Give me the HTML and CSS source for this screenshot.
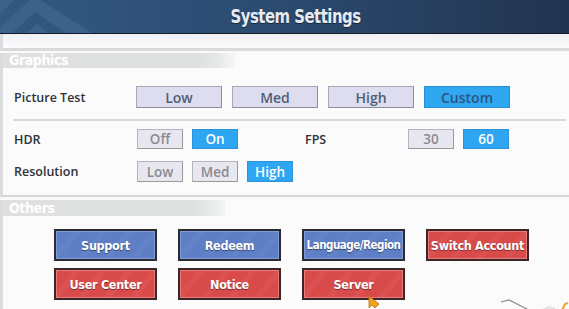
FILE: index.html
```html
<!DOCTYPE html>
<html lang="en">
<head>
    <meta charset="UTF-8">
    <meta name="viewport" content="width=device-width, initial-scale=1.0">
    <title>System Settings</title>
    <link rel="stylesheet" href="styles.css">
</head>
<body>

    <div class="screen">
        <header class="topbar">
            <svg class="topbar-deco" width="120" height="33" viewBox="0 0 120 33">
                <polygon points="0,0 14,0 0,14" fill="#3a6189"/>
                <polygon points="-6,33 34,-4 92,33 66,33 35,12 12,33" fill="#3b628b"/>
                <polygon points="26,33 37,24 47,33" fill="#3b628b"/>
            </svg>
            <h1>System Settings</h1>
        </header>
        <div class="strip"></div>

        <div class="panel graphics">
            <div class="sec-title">Graphics</div>

            <div class="row row-quality">
                <span class="label">Picture Test</span>
                <button class="opt">Low</button>
                <button class="opt">Med</button>
                <button class="opt">High</button>
                <button class="opt on">Custom</button>
            </div>

            <div class="sep"></div>

            <div class="row row-hdr">
                <span class="label">HDR</span>
                <button class="tog">Off</button>
                <button class="tog on">On</button>
                <span class="label label-fps">FPS</span>
                <button class="tog">30</button>
                <button class="tog on">60</button>
            </div>

            <div class="row row-res">
                <span class="label">Resolution</span>
                <button class="tog">Low</button>
                <button class="tog">Med</button>
                <button class="tog on">High</button>
            </div>
        </div>

        <div class="panel others">
            <div class="sec-title">Others</div>
            <div class="action-grid">
                <button class="action blue">Support</button>
                <button class="action blue">Redeem</button>
                <button class="action blue small">Language/Region</button>
                <button class="action red">Switch Account</button>
                <button class="action red">User Center</button>
                <button class="action red">Notice</button>
                <button class="action red">Server</button>
            </div>

            <!-- mouse pointer left in the capture -->
            <svg class="pointer" width="12" height="14" viewBox="0 0 12 14">
                <polygon points="1,1 1,13 4,10 7,13 11,9" fill="#f0a21c" stroke="#b86f08" stroke-width="0.8"/>
            </svg>
            <svg class="corner-deco" width="70" height="16" viewBox="0 0 70 16">
                <path d="M2,6 L10,4 L20,9 L34,16" stroke="#8a8a8a" stroke-width="1.2" fill="none"/>
                <path d="M40,16 L50,11 L56,13" stroke="#e0e0e0" stroke-width="2" fill="none"/>
                <path d="M62,16 L66,8 L69,7" stroke="#f0a030" stroke-width="2" fill="none"/>
            </svg>
        </div>
    </div>

</body>
</html>
```

FILE: styles.css
```css
body {
    margin: 0;
    padding: 0;
    background: #fafafa;
    font-family: 'Open Sans', sans-serif;
}

.screen {
    width: 569px;
    height: 309px;
    overflow: hidden;
    position: relative;
    background: #fafafa;
}

.topbar {
    position: relative;
    height: 33px;
    background: linear-gradient(to right, #33597f, #2b4a70 50%, #22344f);
    border-bottom: 1px solid #151c28;
    display: flex;
    justify-content: center;
    align-items: center;
}

.topbar-deco {
    position: absolute;
    left: 0;
    top: 0;
}

.topbar h1 {
    position: relative;
    margin: 0 0 0 22px;
    font-family: 'DejaVu Sans Condensed', 'Liberation Sans', sans-serif;
    font-weight: bold;
    font-size: 19.5px;
    color: #e6ebf2;
    letter-spacing: -0.6px;
    transform: scaleX(0.85);
    text-shadow: 0 1px 1px rgba(0, 0, 0, 0.5);
}

.strip {
    height: 14px;
    background: linear-gradient(#f0f0f4, #fcfcfd);
    border-left: 3px solid #dcdce0;
    border-bottom: 3px solid #dadade;
}

.panel {
    border-left: 3px solid #dcdce0;
    background: #fbfbfb;
}

.graphics {
    padding-bottom: 13px;
    border-bottom: 2px solid #d6d6da;
}

.sec-title {
    margin-top: 2px;
    width: 232px;
    height: 15px;
    padding-left: 6px;
    box-sizing: border-box;
    background: linear-gradient(to right, #dfe1e1 85%, #e6e8e8 92%, #f4f5f5);
    font-family: 'DejaVu Sans Condensed', 'Liberation Sans', sans-serif;
    font-weight: bold;
    font-size: 14px;
    line-height: 15px;
    color: #ffffff;
    letter-spacing: -0.4px;
}

.others .sec-title {
    margin-top: 3px;
    width: 222px;
    height: 16px;
    line-height: 16px;
}

.row {
    display: flex;
    align-items: center;
    padding-left: 11px;
}

.label {
    width: 122px;
    font-size: 12.5px;
    font-weight: 600;
    color: #2f3238;
}

.row-quality {
    margin-top: 18px;
    gap: 10px;
}

.row-quality .label {
    width: 112px;
}

.opt {
    width: 86px;
    height: 22px;
    padding: 0;
    background: #dedcef;
    border: 1px solid #a9a9b4;
    border-bottom-color: #8e8e98;
    border-right-color: #8e8e98;
    font-family: 'Open Sans', sans-serif;
    font-size: 14px;
    font-weight: 600;
    color: #4f5f78;
}

.opt.on {
    background: #30a7f1;
    border-color: #2a8fd0;
    color: #2b5680;
}

.sep {
    margin: 11px 3px 0 10px;
    height: 2px;
    background: #d8d8dc;
}

.row-hdr {
    margin-top: 8px;
}

.row-hdr .label, .row-res .label {
    width: 123px;
}

.row-res {
    margin-top: 12px;
}

.tog {
    width: 46px;
    height: 20px;
    padding: 0;
    margin-right: 9px;
    background: #e8e7ef;
    border: 1px solid #b4b4bc;
    border-bottom-color: #999;
    border-right-color: #999;
    font-family: 'Open Sans', sans-serif;
    font-size: 13.5px;
    font-weight: 600;
    color: #8a8a90;
}

.row-res .tog {
    height: 21px;
}

.tog.on {
    background: #2fa6f2;
    border-color: #2b94d8;
    color: #ffffff;
}

.row-hdr .label-fps {
    width: 103px;
    margin-left: 58px;
}

.others {
    position: relative;
    height: 112px;
}

.action-grid {
    display: grid;
    grid-template-columns: repeat(4, 103px);
    grid-auto-rows: 32px;
    column-gap: 21px;
    row-gap: 7px;
    margin: 13px 0 0 51px;
}

.action {
    padding: 0;
    border: 2px solid #2a2a30;
    font-family: 'DejaVu Sans Condensed', 'Liberation Sans', sans-serif;
    font-weight: bold;
    font-size: 12.5px;
    letter-spacing: -0.3px;
    color: #ffffff;
    text-shadow: 0 1px 1px rgba(0, 0, 0, 0.45);
}

.action.small {
    font-size: 11.5px;
    letter-spacing: -0.5px;
}

.action.blue {
    background: repeating-linear-gradient(-50deg, #5e7fc6 0 14px, #6383c8 14px 20px);
    box-shadow: inset 0 0 0 1px #7f9bd8;
}

.action.red {
    background: repeating-linear-gradient(-50deg, #d94b4b 0 14px, #dc5252 14px 20px);
    border-color: #3a2626;
    box-shadow: inset 0 0 0 1px #e87a7a;
}

.pointer {
    position: absolute;
    left: 365px;
    top: 95px;
}

.corner-deco {
    position: absolute;
    right: 0;
    bottom: 0;
}
```
